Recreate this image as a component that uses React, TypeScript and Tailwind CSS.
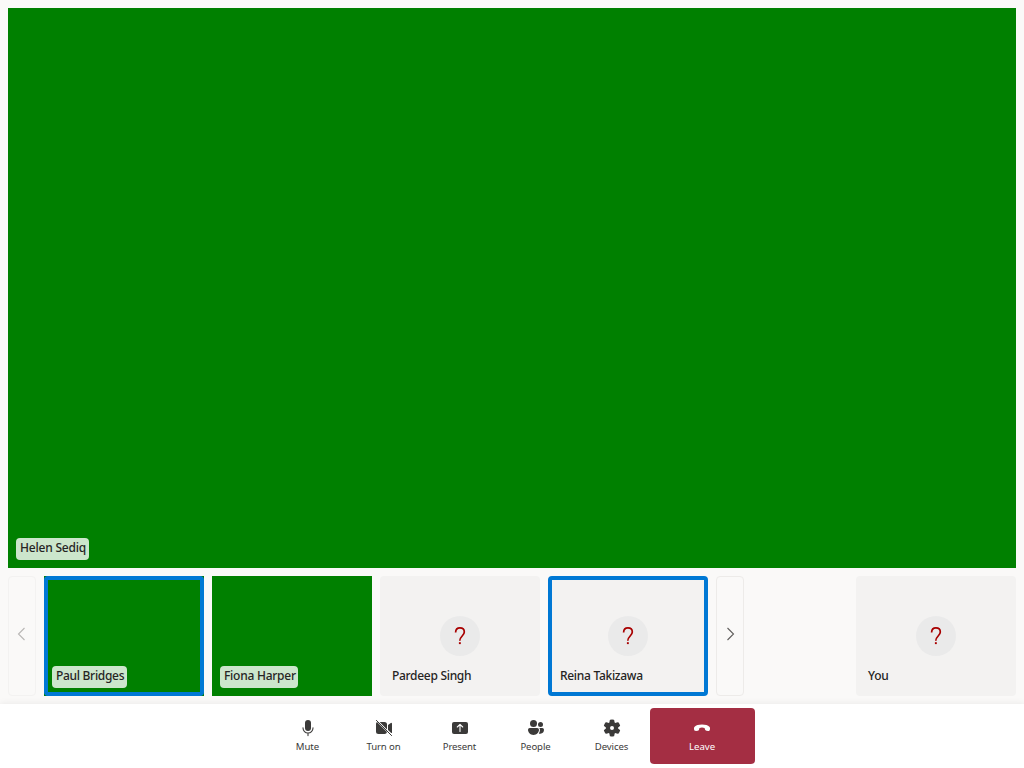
import type { ReactNode } from 'react';

function Icon({ children }: { children: ReactNode }) {
  return (
    <svg width="20" height="20" viewBox="0 0 20 20" fill="currentColor" aria-hidden="true">
      {children}
    </svg>
  );
}

function MicIcon() {
  return (
    <Icon>
      <rect x="7" y="2" width="6" height="11" rx="3" />
      <path d="M5 9.7v.3a5 5 0 0 0 10 0v-.3M10 15v2.6" fill="none" stroke="currentColor" strokeWidth="1.1" strokeLinecap="round" />
    </Icon>
  );
}

function VideoOffIcon() {
  return (
    <Icon>
      <path d="M3 4.1 13 14.1A2.5 2.5 0 0 1 10.500 16h-6A2.500 2.500 0 0 1 2 13.500v-7A2.500 2.500 0 0 1 3 4.100Z" />
      <path d="M5.600 4h4.900A2.500 2.500 0 0 1 13 6.500v4.900Z" />
      <path d="M14 6.900 16.800 5A.75.75 0 0 1 18 5.600v8.800a.75.75 0 0 1-.8.700L14 12.100Z" />
      <path d="m2.400 2.400 15.200 15.200" fill="none" stroke="currentColor" strokeLinecap="round" />
    </Icon>
  );
}

function PresentIcon() {
  return (
    <Icon>
      <rect x="2" y="4" width="16" height="12" rx="2" />
      <path d="M10 13.500v-7M7.300 9 10 6.300 12.700 9" fill="none" stroke="white" strokeWidth="1.100" strokeLinecap="round" strokeLinejoin="round" />
    </Icon>
  );
}

function PeopleIcon() {
  return (
    <Icon>
      <circle cx="7.5" cy="5.5" r="3.5" />
      <circle cx="14.5" cy="6.5" r="2.5" />
      <path d="M3.800 10h7.400a1.800 1.800 0 0 1 1.800 1.800c0 2.500-2.100 5.200-5.500 5.200S2 14.300 2 11.800A1.800 1.800 0 0 1 3.800 10Z" />
      <path d="M13.200 10h3a1.800 1.800 0 0 1 1.800 1.800c0 1.900-1.200 3.900-3.700 3.900-.6 0-1.100-.1-1.500-.2.800-1.100 1.200-2.300 1.200-3.700 0-.7-.3-1.300-.8-1.800Z" />
    </Icon>
  );
}

function SettingsIcon() {
  return (
    <Icon>
      <path d="M1.91 7.38A8.5 8.5 0 0 1 3.7 4.3a.5.5 0 0 1 .54-.13l1.92.68a1 1 0 0 0 1.32-.76l.36-2a.5.5 0 0 1 .4-.4 8.53 8.53 0 0 1 3.55 0c.2.04.35.2.38.4l.37 2a1 1 0 0 0 1.32.76l1.92-.68a.5.5 0 0 1 .54.13 8.5 8.5 0 0 1 1.78 3.08c.06.2 0 .4-.15.54l-1.56 1.32a1 1 0 0 0 0 1.52l1.56 1.32a.5.5 0 0 1 .15.54 8.5 8.5 0 0 1-1.78 3.08.5.5 0 0 1-.54.13l-1.92-.68a1 1 0 0 0-1.32.76l-.37 2a.5.5 0 0 1-.38.4 8.53 8.53 0 0 1-3.56 0 .5.5 0 0 1-.39-.4l-.36-2a1 1 0 0 0-1.32-.76l-1.92.68a.5.5 0 0 1-.54-.13 8.5 8.5 0 0 1-1.78-3.08.5.5 0 0 1 .15-.54l1.56-1.32a1 1 0 0 0 0-1.52L2.06 7.92a.5.5 0 0 1-.15-.54ZM8 10a2 2 0 1 0 4 0 2 2 0 0 0-4 0Z" />
    </Icon>
  );
}

function CallEndIcon() {
  return (
    <Icon>
      <path d="m18 10.900-.16.900c-.15.800-.87 1.300-1.700 1.200l-1.650-.16c-.7-.07-1.250-.6-1.450-1.250l-.5-1.700A6.500 6.500 0 0 0 10 9.400a6.500 6.500 0 0 0-2.540.49l-.38 1.700c-.15.700-.75 1.200-1.450 1.250l-1.640.16c-.83.08-1.600-.430-1.820-1.200L2 10.900c-.22-.83.020-1.640.620-2.200C4.050 7.300 6.500 6.400 10 6.400s5.900.900 7.400 2.300c.6.560.79 1.400.6 2.200Z" />
    </Icon>
  );
}

function QuestionIcon() {
  return (
    <svg width="20" height="20" viewBox="0 0 20 20" fill="none" className="text-[#a80000]" aria-hidden="true">
      <path d="M5.600 6.500C5.700 3.600 7.300 1.900 9.900 1.900c2.600 0 4.400 1.600 4.400 4.100 0 3.800-4.500 4.300-4.500 8.700" stroke="currentColor" strokeWidth="1.700" />
      <rect x="8.900" y="16.200" width="1.900" height="1.900" fill="currentColor" />
    </svg>
  );
}

function PageButton({ direction }: { direction: 'left' | 'right' }) {
  const left = direction === 'left';
  return (
    <button
      aria-label={left ? 'Previous' : 'Next'}
      disabled={left}
      className={`flex h-[120px] w-7 shrink-0 items-center rounded border ${
        left ? 'border-[#f3f2f1] pl-[7px] text-[#b9b7b5]' : 'border-[#edebe9] pl-2 text-[#605e5c]'
      }`}
    >
      <svg width="12" height="14" viewBox="0 0 12 14" fill="none" stroke="currentColor" className="-mt-1" aria-hidden="true">
        <path d={left ? 'M8.500 1 2.500 7l6 6' : 'm2.500 1 6 6-6 6'} strokeWidth="1.100" />
      </svg>
    </button>
  );
}

function NameTag({ name, width }: { name: string; width: string }) {
  return (
    <span
      className={`flex h-[22px] items-center rounded bg-white/80 pl-1 text-[12px] leading-4 font-medium whitespace-nowrap text-[#252423] ${width}`}
    >
      <span className="-mt-0.5">{name}</span>
    </span>
  );
}

function VideoTile({ name, width, speaking = false }: { name: string; width: string; speaking?: boolean }) {
  return (
    <div className="h-[120px] w-40 shrink-0 bg-[#008000]">
      <div className={`flex h-full items-end rounded ${speaking ? 'border-4 border-[#0078d4] p-1' : 'p-2'}`}>
        <NameTag name={name} width={width} />
      </div>
    </div>
  );
}

function AvatarTile({ name, spacing, speaking = false }: { name: string; spacing: string; speaking?: boolean }) {
  return (
    <div
      className={`flex h-[120px] w-40 shrink-0 flex-col rounded bg-[#f3f2f1] ${
        speaking ? 'border-4 border-[#0078d4] px-2 pt-9' : 'px-3 pt-10'
      }`}
    >
      <div className="flex size-10 shrink-0 items-center justify-center self-center rounded-full bg-[#eaeaea]">
        <QuestionIcon />
      </div>
      <span className={`mt-3 text-[12px] leading-4 font-medium whitespace-nowrap text-[#252423] ${spacing}`}>
        {name}
      </span>
    </div>
  );
}

function ControlButton({ label, icon, spacing }: { label: string; icon: ReactNode; spacing: string }) {
  return (
    <button className="flex h-14 w-[76px] flex-col items-center pt-2.5 text-[#3b3a39]">
      {icon}
      <span className={`mt-0.5 mr-px text-[9.6px] leading-[14px] whitespace-nowrap ${spacing}`}>{label}</span>
    </button>
  );
}

export default function App() {
  return (
    <div className="flex h-screen flex-col overflow-hidden bg-[#faf9f8] font-['Segoe_UI','Noto_Sans',sans-serif]">
      <main className="flex flex-1 flex-col gap-2 p-2">
        <section className="flex h-[560px] items-end bg-[#008000] p-2">
          <NameTag name="Helen Sediq" width="w-[73px] tracking-[-0.2px]" />
        </section>
        <section className="flex h-[120px] justify-between">
          <div className="flex gap-2">
            <PageButton direction="left" />
            <VideoTile name="Paul Bridges" width="w-[75px] tracking-[-0.3px]" speaking />
            <VideoTile name="Fiona Harper" width="w-[78px] tracking-[-0.25px]" />
            <AvatarTile name="Pardeep Singh" spacing="tracking-[-0.3px]" />
            <AvatarTile name="Reina Takizawa" spacing="tracking-[-0.3px]" speaking />
            <PageButton direction="right" />
          </div>
          <AvatarTile name="You" spacing="tracking-[-0.2px]" />
        </section>
      </main>
      <footer className="flex h-16 shrink-0 bg-white py-1 pl-[270px] shadow-[0_0_7px_rgba(0,0,0,0.08)]">
        <ControlButton label="Mute" icon={<MicIcon />} spacing="tracking-[0px]" />
        <ControlButton label="Turn on" icon={<VideoOffIcon />} spacing="tracking-[-0.15px]" />
        <ControlButton label="Present" icon={<PresentIcon />} spacing="tracking-[-0.15px]" />
        <ControlButton label="People" icon={<PeopleIcon />} spacing="tracking-[-0.1px]" />
        <ControlButton label="Devices" icon={<SettingsIcon />} spacing="tracking-[-0.1px]" />
        <button className="flex h-14 w-[105px] flex-col items-center rounded-sm bg-[#a42e43] pt-2.5 pr-px text-white">
          <CallEndIcon />
          <span className="mt-0.5 text-[9.6px] leading-[14px]">Leave</span>
        </button>
      </footer>
    </div>
  );
}
